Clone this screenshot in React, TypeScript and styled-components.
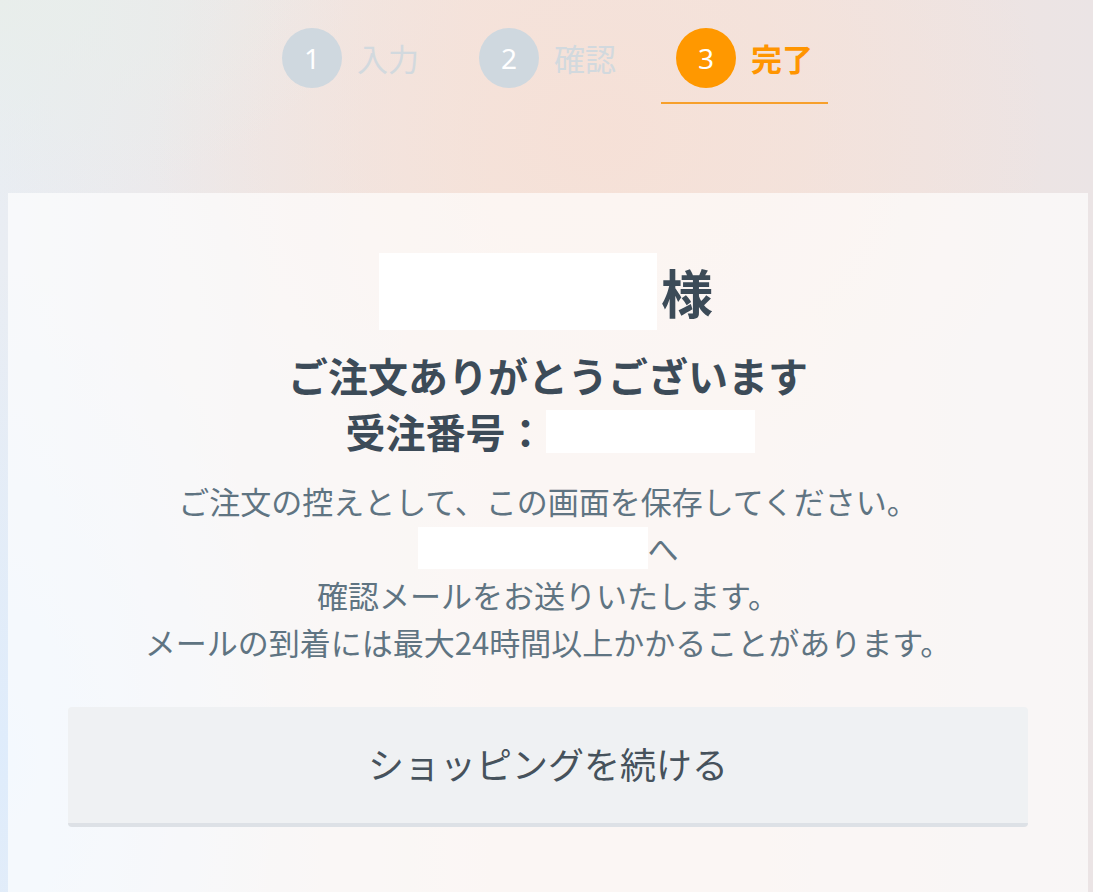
import React from "react";
import styled, { createGlobalStyle } from "styled-components";

const GlobalStyle = createGlobalStyle`
  html, body {
    margin: 0;
    padding: 0;
    height: 100%;
  }
  body {
    font-family: "Noto Sans CJK JP", "Noto Sans", sans-serif;
    background:
      radial-gradient(ellipse 420px 700px at 0% 85%, rgba(222, 236, 252, 0.95), rgba(222, 236, 252, 0) 70%),
      radial-gradient(ellipse 500px 300px at 0% 0%, rgba(232, 238, 234, 0.9), rgba(232, 238, 234, 0) 70%),
      radial-gradient(ellipse 600px 500px at 55% 15%, rgba(246, 224, 214, 0.9), rgba(246, 224, 214, 0) 75%),
      linear-gradient(90deg, #e9edf3 0%, #ede8e8 22%, #f3e5df 45%, #f2e4df 70%, #ebe4e5 100%);
    min-height: 892px;
    overflow: hidden;
  }
`;

const Page = styled.div`
  min-height: 892px;
  display: flex;
  flex-direction: column;
`;

const Steps = styled.nav`
  display: flex;
  justify-content: center;
  gap: 30px;
  padding-top: 28px;
  margin-left: 2px;
  margin-bottom: 89px;
`;

const Step = styled.div<{ $active?: boolean }>`
  display: flex;
  align-items: center;
  gap: 15px;
  width: 167px;
  box-sizing: border-box;
  padding: 0 15px 14px;
  border-bottom: 2px solid ${(p) => (p.$active ? "#f7a02c" : "transparent")};
`;

const Circle = styled.span<{ $active?: boolean }>`
  width: 60px;
  height: 60px;
  border-radius: 50%;
  background: ${(p) => (p.$active ? "#ff9800" : "#cfd8df")};
  color: #ffffff;
  display: flex;
  align-items: center;
  justify-content: center;
  font-family: "Noto Sans", sans-serif;
  font-size: 28px;
  line-height: 1;
  flex-shrink: 0;
`;

const StepLabel = styled.span<{ $active?: boolean }>`
  font-size: 31px;
  font-weight: ${(p) => (p.$active ? 700 : 400)};
  color: ${(p) => (p.$active ? "#ff9500" : "#d2d9de")};
  white-space: nowrap;
  line-height: 1;
  margin-top: -2px;
`;

const Card = styled.main`
  flex: 1;
  margin: 0 5px 0 8px;
  background: rgba(255, 255, 255, 0.66);
  padding: 60px 60px 40px;
  display: flex;
  flex-direction: column;
  align-items: center;
  color: #3c4b58;
`;

const NameRow = styled.div`
  height: 77px;
  display: flex;
  align-items: center;
  gap: 4px;
  margin-left: -4px;
  margin-bottom: 17px;
`;

const Blank = styled.span<{ $w: number; $h: number }>`
  display: inline-block;
  width: ${(p) => p.$w}px;
  height: ${(p) => p.$h}px;
  background: #ffffff;
  vertical-align: middle;
`;

const Honorific = styled.span`
  font-size: 52px;
  font-weight: 700;
  line-height: 1;
`;

const Thanks = styled.h1`
  margin: 0;
  font-size: 40px;
  font-weight: 700;
  line-height: 56px;
  text-align: center;
`;

const OrderRow = styled.div`
  display: flex;
  align-items: center;
  height: 56px;
  font-size: 40px;
  font-weight: 700;
  margin-left: 4px;
  margin-bottom: 18px;
`;

const Body = styled.div`
  font-size: 31px;
  line-height: 47px;
  color: #5f7482;
  text-align: center;
`;

const Line = styled.p`
  margin: 0;
  display: flex;
  justify-content: center;
  align-items: center;
  height: 47px;
`;

const Button = styled.button`
  margin-top: 42px;
  width: 960px;
  height: 120px;
  border: none;
  border-bottom: 4px solid #dde1e6;
  border-radius: 4px;
  background: #eff1f3;
  color: #46525c;
  font-family: "Noto Sans CJK JP", "Noto Sans", sans-serif;
  font-size: 36px;
  font-weight: 400;
  cursor: pointer;
  padding: 0 0 4px;
`;

export default function App() {
  return (
    <>
      <GlobalStyle />
      <Page>
        <Steps>
          <Step>
            <Circle>1</Circle>
            <StepLabel>入力</StepLabel>
          </Step>
          <Step>
            <Circle>2</Circle>
            <StepLabel>確認</StepLabel>
          </Step>
          <Step $active>
            <Circle $active>3</Circle>
            <StepLabel $active>完了</StepLabel>
          </Step>
        </Steps>
        <Card>
          <NameRow>
            <Blank $w={278} $h={77} />
            <Honorific>様</Honorific>
          </NameRow>
          <Thanks>ご注文ありがとうございます</Thanks>
          <OrderRow>
            受注番号：
            <Blank $w={209} $h={43} />
          </OrderRow>
          <Body>
            <Line>ご注文の控えとして、この画面を保存してください。</Line>
            <Line>
              <Blank $w={230} $h={42} />へ
            </Line>
            <Line>確認メールをお送りいたします。</Line>
            <Line>メールの到着には最大24時間以上かかることがあります。</Line>
          </Body>
          <Button type="button">ショッピングを続ける</Button>
        </Card>
      </Page>
    </>
  );
}
